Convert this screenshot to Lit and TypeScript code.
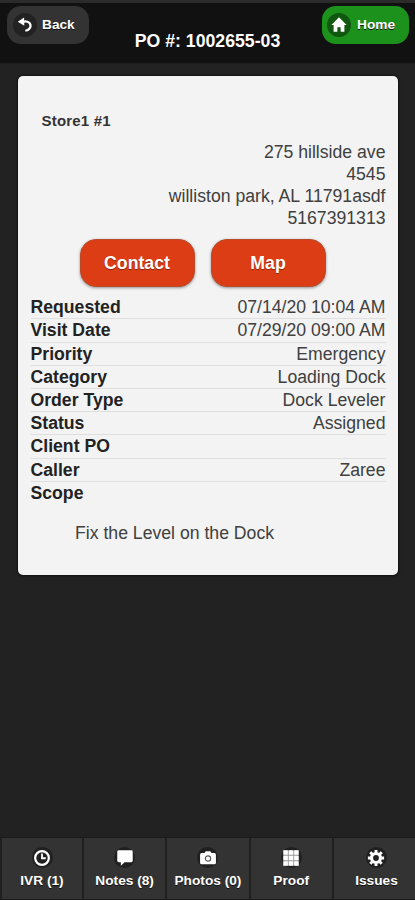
import { LitElement, html, css, svg } from "lit";
import { customElement } from "lit/decorators.js";

const icons = {
  back: svg`<path d="M7.6 6.6C11 5.4 15 6.2 16 9.6c.9 3.3-1.5 6-5.6 6.8" fill="none" stroke="#fff" stroke-width="2.5"/><path d="M2 6.4 9 1.8 9.2 10.8z" fill="#fff"/>`,
  home: svg`<path d="M10 1.5 18.5 10H16v7.5h-4.2v-5H8.2v5H4V10H1.5z" fill="#fff"/>`,
  clock: svg`<circle cx="10" cy="10" r="7.6" fill="none" stroke="#fff" stroke-width="2.5"/><path d="M10 5v5.3h4.2" fill="none" stroke="#fff" stroke-width="2"/>`,
  comment: svg`<path d="M3 1.5h14a1.6 1.6 0 0 1 1.6 1.6v10a1.6 1.6 0 0 1-1.6 1.6H9.5L5.4 18.5V14.7H3a1.6 1.6 0 0 1-1.6-1.6v-10A1.6 1.6 0 0 1 3 1.5z" fill="#fff"/>`,
  camera: svg`<path d="M3 4.5h3l1.5-2h5l1.5 2h3a1.8 1.8 0 0 1 1.8 1.8v8.9A1.8 1.8 0 0 1 17 17H3a1.8 1.8 0 0 1-1.8-1.8V6.3A1.8 1.8 0 0 1 3 4.5z" fill="#fff"/><circle cx="10" cy="10.6" r="3" fill="none" stroke="#555" stroke-width="1.2"/>`,
  grid: svg`<path d="M1.5 1.5h17v17h-17z" fill="#999"/><path d="M1.5 1.5h5v5h-5zM7.5 1.5h5v5h-5zM13.5 1.5h5v5h-5zM1.5 7.5h5v5h-5zM7.5 7.5h5v5h-5zM13.5 7.5h5v5h-5zM1.5 13.5h5v5h-5zM7.5 13.5h5v5h-5zM13.5 13.5h5v5h-5z" fill="#fff"/>`,
  gear: svg`<circle cx="10" cy="10" r="5" fill="none" stroke="#fff" stroke-width="3.6"/><path d="M10 1v3.2M10 15.8V19M1 10h3.2M15.8 10H19M3.6 3.6l2.3 2.3M14.1 14.1l2.3 2.3M3.6 16.4l2.3-2.3M14.1 5.9l2.3-2.3" stroke="#fff" stroke-width="3.2"/>`,
};

type IconName = keyof typeof icons;

const address = ["275 hillside ave", "4545", "williston park, AL 11791asdf", "5167391313"];

const details: [string, string][] = [
  ["Requested", "07/14/20 10:04 AM"],
  ["Visit Date", "07/29/20 09:00 AM"],
  ["Priority", "Emergency"],
  ["Category", "Loading Dock"],
  ["Order Type", "Dock Leveler"],
  ["Status", "Assigned"],
  ["Client PO", ""],
  ["Caller", "Zaree"],
  ["Scope", ""],
];

const tabs: [IconName, string][] = [
  ["clock", "IVR (1)"],
  ["comment", "Notes (8)"],
  ["camera", "Photos (0)"],
  ["grid", "Proof"],
  ["gear", "Issues"],
];

@customElement("app-root")
export class AppRoot extends LitElement {
  static styles = css`
    :host {
      display: flex;
      flex-direction: column;
      box-sizing: border-box;
      width: 415px;
      height: 900px;
      overflow: hidden;
      background: #222;
      color: #404040;
      font: 17.65px/22px "Liberation Sans", Arial, sans-serif;
    }
    * { box-sizing: border-box; }
    header {
      display: grid;
      grid-template-columns: 82px 1fr 87px;
      align-items: start;
      height: 64px;
      padding: 3px 6px 0 7px;
      background: #111;
      border-top: 3px solid #2b2b2b;
      border-bottom: 1px solid #1d1d1d;
      color: #fff;
      text-shadow: 0 1px 0 #111;
    }
    h1 {
      margin: 24px 0 0 4px;
      font-size: 17.7px;
      line-height: 22px;
      text-align: center;
      white-space: nowrap;
    }
    .pill {
      display: flex;
      align-items: center;
      height: 38px;
      padding: 0 0 0 7px;
      gap: 5px;
      border-radius: 14px;
      background: #333;
      font-size: 13.7px;
      font-weight: bold;
    }
    .pill.home { background: #1c911c; padding-left: 5px; gap: 6px; }
    .disc {
      display: flex;
      align-items: center;
      justify-content: center;
      width: 21px;
      height: 21px;
      border-radius: 50%;
      background: #202020;
      flex: none;
    }
    .pill .disc { width: 24px; height: 24px; background: #222; margin-left: -1px; }
    .pill.home .disc { background: #105710; margin-left: 0; }
    svg { display: block; width: 18px; height: 18px; }
    .card {
      height: 499px;
      margin: 12px 17px 0 18px;
      padding: 35px 12.5px 0 12.5px;
      border-radius: 5px;
      background: #f3f3f3;
      box-shadow: 0 0 2px 1px #111;
    }
    .store {
      margin: 0 0 0 11px;
      font-size: 15px;
      line-height: 20px;
      font-weight: bold;
      letter-spacing: 0.2px;
      color: #333;
    }
    .address { margin-top: 10px; text-align: right; }
    .actions {
      display: flex;
      justify-content: center;
      gap: 16px;
      margin: 10px 11px 0 0;
    }
    .action {
      width: 115px;
      height: 48px;
      border: 1px solid #b94a2b;
      border-radius: 16px;
      background: #dd3d15;
      box-shadow: 0 1px 3px rgba(0, 0, 0, 0.4);
      color: #fff;
      font-size: 17.7px;
      font-weight: bold;
      line-height: 46px;
      text-align: center;
      text-shadow: 0 1px 1px rgba(0, 0, 0, 0.4);
    }
    .details { margin-top: 9.2px; }
    .row {
      display: flex;
      justify-content: space-between;
      height: 23.2px;
      border-bottom: 1px solid #dfdfdf;
      line-height: 22px;
    }
    .row:last-child { border-bottom-color: transparent; }
    .row b { color: #222; }
    .scope { margin: 17px 0 0 44.5px; }
    nav {
      display: grid;
      grid-template-columns: 84px repeat(3, 83.3px) 1fr;
      height: 63px;
      margin-top: auto;
      background: #333;
      border-top: 1px solid #1b1b1b;
    }
    .tab {
      display: flex;
      flex-direction: column;
      align-items: center;
      padding-top: 9px;
      border-right: 2px solid #202020;
      border-bottom: 1px solid #1b1b1b;
      color: #fff;
      font-size: 13.7px;
      font-weight: bold;
      line-height: 18px;
      white-space: nowrap;
      text-shadow: 0 1px 0 #111;
      gap: 4px;
    }
    .tab:first-child { border-left: 2px solid #202020; }
    .tab:last-child { border-right: 0; padding-left: 4px; }
  `;

  private icon(name: IconName) {
    return html`<span class="disc"><svg viewBox="0 0 20 20">${icons[name]}</svg></span>`;
  }

  render() {
    return html`
      <header>
        <div class="pill">${this.icon("back")}<span>Back</span></div>
        <h1>PO #: 1002655-03</h1>
        <div class="pill home">${this.icon("home")}<span>Home</span></div>
      </header>
      <main class="card">
        <h2 class="store">Store1 #1</h2>
        <div class="address">${address.map((line) => html`<div>${line}</div>`)}</div>
        <div class="actions">
          <div class="action">Contact</div>
          <div class="action">Map</div>
        </div>
        <div class="details">
          ${details.map(([label, value]) => html`<div class="row"><b>${label}</b><span>${value}</span></div>`)}
        </div>
        <div class="scope">Fix the Level on the Dock</div>
      </main>
      <nav>
        ${tabs.map(([name, label]) => html`<div class="tab">${this.icon(name)}<span>${label}</span></div>`)}
      </nav>
    `;
  }
}
